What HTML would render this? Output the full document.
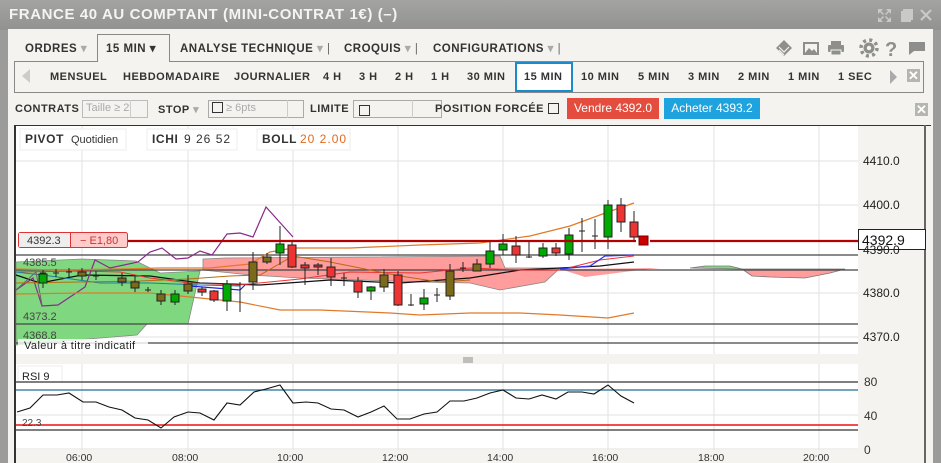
<!DOCTYPE html>
<html><head><meta charset="utf-8"><style>
*{margin:0;padding:0;box-sizing:border-box}
body{width:941px;height:463px;overflow:hidden;background:#9b9c99;font-family:"Liberation Sans",sans-serif;position:relative}
.title{position:absolute;left:0;top:0;width:941px;height:30px;background:linear-gradient(#a3a4a1,#929390);}
.title span{position:absolute;left:9px;top:6px;color:#f4f4f2;font-weight:bold;font-size:15px;letter-spacing:0.6px}
.main{position:absolute;left:8px;top:29px;width:925px;height:434px;background:#f4f3ef}
.t{position:absolute;font-size:11.5px;font-weight:bold;color:#333;letter-spacing:0.5px;white-space:nowrap}
.ab{position:absolute}
</style></head><body>
<div class="title"><span>FRANCE 40 AU COMPTANT (MINI-CONTRAT 1€) (–)</span>
<svg class="ab" style="left:876px;top:7px" width="60" height="17"><g fill="#c9cac7"><path d="M2 2h5l-2 2 3 3-1 1-3-3-2 2z M15 2h-5l2 2-3 3 1 1 3-3 2 2z M2 15h5l-2-2 3-3-1-1-3 3-2-2z M15 15h-5l2-2-3-3 1-1 3 3 2-2z"/><rect x="25" y="4" width="10" height="11"/><rect x="27" y="2" width="10" height="11"/></g><path d="M45 3l10 10M55 3l-10 10" stroke="#c9cac7" stroke-width="2.2"/></svg>
</div>
<div class="main"></div>
<!-- menu row -->
<div class="ab" style="left:97px;top:34px;width:73px;height:28px;border:1px solid #888;border-bottom:none;background:#f4f3ef"></div>
<div class="t" style="left:25px;top:41px">ORDRES <span style="color:#aaa">▾</span></div>
<div class="t" style="left:106px;top:41px">15 MIN ▾</div>
<div class="t" style="left:180px;top:41px">ANALYSE TECHNIQUE <span style="color:#aaa">▾</span> <span style="font-weight:normal;color:#666">|</span></div>
<div class="t" style="left:344px;top:41px">CROQUIS <span style="color:#aaa">▾</span> <span style="font-weight:normal;color:#666">|</span></div>
<div class="t" style="left:433px;top:41px">CONFIGURATIONS <span style="color:#aaa">▾</span> <span style="font-weight:normal;color:#666">|</span></div>
<svg class="ab" style="left:772px;top:38px" width="160" height="20" fill="#8e8f8c">
<path d="M4 10l8-8 8 8-8 8z" /><path d="M7 9l5 5 5-5M7 12l5 5" stroke="#f4f3ef" stroke-width="1.2" fill="none"/>
<rect x="31" y="4" width="16" height="13" fill="#8e8f8c"/><rect x="33" y="6" width="12" height="9" fill="#f4f3ef"/><path d="M33 15l4-5 3 3 2-2 3 4z"/>
<rect x="59" y="3" width="10" height="4"/><rect x="56" y="7" width="16" height="7" rx="1"/><rect x="59" y="12" width="10" height="5" fill="#8e8f8c" stroke="#f4f3ef"/>
<circle cx="97" cy="10" r="8" fill="none" stroke="#8e8f8c" stroke-width="3.5" stroke-dasharray="3 3.28"/><circle cx="97" cy="10" r="5.5"/><circle cx="97" cy="10" r="2.2" fill="#f4f3ef"/>
<text x="113" y="18" font-size="20" font-weight="bold" font-family="Liberation Sans">?</text>
<path d="M137 4h16v9h-11l-5 4z"/>
</svg>
<!-- timeframe row -->
<div class="ab" style="left:14px;top:61px;width:910px;height:32px;border:1px solid #888;border-top:1px solid #888"></div>
<div class="ab" style="left:98px;top:61px;width:71px;height:2px;background:#f4f3ef"></div>
<div class="ab" style="left:22px;top:69px;width:0;height:0;border-top:7px solid transparent;border-bottom:7px solid transparent;border-right:8px solid #ccc"></div>
<div class="ab" style="left:515px;top:62px;width:58px;height:30px;border:2px solid #1b8ccb;background:#fff"></div>
<div class="t" style="left:50px;top:71px;font-size:11px">MENSUEL</div>
<div class="t" style="left:123px;top:71px;font-size:11px">HEBDOMADAIRE</div>
<div class="t" style="left:234px;top:71px;font-size:11px">JOURNALIER</div>
<div class="t" style="left:323px;top:71px;font-size:11px">4 H</div>
<div class="t" style="left:359px;top:71px;font-size:11px">3 H</div>
<div class="t" style="left:395px;top:71px;font-size:11px">2 H</div>
<div class="t" style="left:431px;top:71px;font-size:11px">1 H</div>
<div class="t" style="left:467px;top:71px;font-size:11px">30 MIN</div>
<div class="t" style="left:524px;top:71px;font-size:11px">15 MIN</div>
<div class="t" style="left:581px;top:71px;font-size:11px">10 MIN</div>
<div class="t" style="left:638px;top:71px;font-size:11px">5 MIN</div>
<div class="t" style="left:688px;top:71px;font-size:11px">3 MIN</div>
<div class="t" style="left:738px;top:71px;font-size:11px">2 MIN</div>
<div class="t" style="left:788px;top:71px;font-size:11px">1 MIN</div>
<div class="t" style="left:838px;top:71px;font-size:11px">1 SEC</div>
<div class="ab" style="left:890px;top:70px;width:0;height:0;border-top:7px solid transparent;border-bottom:7px solid transparent;border-left:7px solid #aaa"></div>
<div class="ab" style="left:907px;top:69px;width:13px;height:13px;background:#b5b5b2;color:#fff;font-size:13px;font-weight:bold;line-height:13px;text-align:center">✕</div>
<!-- order row -->
<div class="t" style="left:15px;top:103px;font-size:11px">CONTRATS</div>
<div class="ab" style="left:82px;top:100px;width:66px;height:18px;border:1px solid #bbb;background:#f4f3ef;font-size:11px;color:#aaa;padding:1px 3px">Taille ≥ 2</div>
<div class="ab" style="left:130px;top:100px;width:1px;height:18px;background:#ccc"></div>
<div class="t" style="left:158px;top:103px;font-size:11px">STOP <span style="color:#aaa">▾</span></div>
<div class="ab" style="left:208px;top:100px;width:96px;height:18px;border:1px solid #aaa;font-size:11px;color:#aaa;padding:1px 3px"><span style="display:inline-block;width:11px;height:11px;border:1px solid #333;vertical-align:-2px"></span> ≥ 6pts</div>
<div class="ab" style="left:287px;top:100px;width:1px;height:18px;background:#ccc"></div>
<div class="t" style="left:310px;top:103px;font-size:11px">LIMITE</div>
<div class="ab" style="left:353px;top:100px;width:89px;height:18px;border:1px solid #aaa;padding:2px 5px"><span style="display:inline-block;width:11px;height:11px;border:1px solid #333"></span></div>
<div class="ab" style="left:412px;top:100px;width:1px;height:18px;background:#ccc"></div>
<div class="t" style="left:435px;top:103px;font-size:11px">POSITION FORCÉE <span style="display:inline-block;width:11px;height:11px;border:1px solid #333;vertical-align:-2px"></span></div>
<div class="ab" style="left:567px;top:98px;width:92px;height:21px;background:#e44d3d;color:#fff;font-size:12px;text-align:center;line-height:21px">Vendre 4392.0</div>
<div class="ab" style="left:664px;top:98px;width:96px;height:21px;background:#1ea3de;color:#fff;font-size:12px;text-align:center;line-height:21px">Acheter 4393.2</div>
<div class="ab" style="left:915px;top:103px;width:13px;height:13px;background:#b5b5b2;color:#fff;font-size:13px;font-weight:bold;line-height:13px;text-align:center">✕</div>
<!-- chart frame -->
<div class="ab" style="left:14px;top:125px;width:917px;height:338px;border-left:2px solid #333;border-top:1px solid #333;background:#f4f3ef"></div>
<div class="ab" style="left:924px;top:125px;width:2px;height:338px;background:#666"></div>
<svg class="ab" style="left:0;top:0" width="941" height="463" font-family="Liberation Sans">
<rect x="16" y="126" width="842" height="228" fill="#fff"/>
<rect x="16" y="364" width="842" height="86" fill="#fff"/>
<g stroke="#e2e2e2" stroke-width="1">
<path d="M82 126V354M188 126V354M293 126V354M398 126V354M503 126V354M608 126V354M714 126V354M819 126V354"/>
<path d="M16 161H858M16 205H858M16 293H858M16 337H858"/>
<path d="M82 364V450M188 364V450M293 364V450M398 364V450M503 364V450M608 364V450M714 364V450M819 364V450"/>
<path d="M16 415H858M16 449H858"/>
</g>
<!-- legend boxes -->
<g fill="#fff" stroke="#eee"><rect x="20" y="129" width="106" height="21"/><rect x="147" y="129" width="90" height="21"/><rect x="257" y="129" width="93" height="21"/></g>
<text x="25" y="143" font-size="12" font-weight="bold" fill="#333" letter-spacing="0.6">PIVOT</text>
<text x="71" y="143" font-size="11" fill="#333">Quotidien</text>
<text x="152" y="143" font-size="12" font-weight="bold" fill="#333" letter-spacing="0.6">ICHI</text>
<text x="184" y="143" font-size="12" fill="#333" letter-spacing="1">9 26 52</text>
<text x="262" y="143" font-size="12" font-weight="bold" fill="#333" letter-spacing="0.6">BOLL</text>
<text x="300" y="143" font-size="12" fill="#e06a1f" letter-spacing="1">20 2.00</text>
<!-- clouds -->
<path d="M16 262L82 259L136 261L160 273L200 271L188 324L147 324L137 335L16 345Z" fill="#7fd87f" stroke="#888" stroke-width="0.8"/>
<path d="M203 259L225 258L500 256L505 268L560 268L545 282L500 290L470 283L420 282L360 280L300 278L250 275L203 270Z" fill="#ff9d9d" stroke="#888" stroke-width="0.8"/>
<path d="M560 269L585 277L640 270L650 269L660 268Z" fill="#ff9d9d"/>
<path d="M690 268L705 266L730 266L742 269Z" fill="#7fd87f" stroke="#777" stroke-width="0.8"/>
<path d="M742 269L752 276L770 277L805 278L830 273L845 269Z" fill="#ff9d9d" stroke="#777" stroke-width="0.8"/>
<!-- horizontal pivots -->
<g stroke="#444" stroke-width="1.2"><path d="M16 255H858M16 270H858M16 324H858M16 343H858"/></g>
<!-- ichimoku lines -->
<path d="M16 275L40 283L82 275L150 276L200 283L260 285L330 280L400 283L470 278L520 270L560 268L600 266L634 262" stroke="#111" stroke-width="1.3" fill="none"/>
<path d="M16 272L82 271L120 272L150 278L190 283L238 285L300 279L350 272L420 273L470 268L520 270L560 270L600 260L634 256" stroke="#e33" stroke-width="1" fill="none"/>
<path d="M16 272L50 276L100 283L150 283L200 285L240 286" stroke="#1f7e9f" stroke-width="1" fill="none"/>
<path d="M190 286L240 290L245 285" stroke="#22d" stroke-width="1.2" fill="none"/>
<path d="M560 269L590 266L605 256L634 255" stroke="#33e" stroke-width="1.2" fill="none"/>
<path d="M16 290L33 278L42 306L58 305L85 287L95 260L110 268L138 262L150 252L162 248L176 259L188 258L200 251L212 255L227 234L240 233L253 237L266 207L293 237" stroke="#8b2a8b" stroke-width="1.2" fill="none"/>
<path d="M16 290L36 272L42 305" stroke="#666" stroke-width="1" fill="none"/>
<!-- bollinger -->
<path d="M16 269L60 270L120 269L160 268L210 268L250 264L270 252L293 248L350 248L420 245L480 243L530 236L570 226L608 212L634 203" stroke="#e07a2a" stroke-width="1.2" fill="none"/>
<path d="M16 294L80 293L150 293L200 298L240 302L280 310L320 310L390 313L420 315L470 313L520 313L560 315L608 318L634 313" stroke="#e07a2a" stroke-width="1.2" fill="none"/>
<path d="M16 283L80 282L140 281L188 279L230 276L260 275L293 256L330 262L360 268L400 276L440 282L470 280" stroke="#b86c10" stroke-width="1" fill="none"/>
<!-- candles -->
<g stroke="#222" stroke-width="1">
<path d="M43 270V288M56 269V277M69 268V277M82 268V280M96 271V280M122 273V286M135 276V292M148 287V292M161 290V305M175 290V305M188 275V294M202 287V296M214 290V302M227 280V311M240 282V312M253 252V290M267 253V264M280 226V265M292 240V268M305 262V285M318 263V275M331 258V286M344 273V286M358 277V298M371 286V300M384 269V292M398 271V306M411 294V306M424 289V310M437 288V302M450 264V300M463 262V272M477 259V271M490 240V268M503 234V255M516 236V263M529 242V258M543 243V258M556 243V256M569 228V260M582 218V252M595 219V249M608 200V249M621 198V232M634 211V240"/>
<path d="M40 273H46M53 273H59M66 272H72M93 276H99M145 290H151M341 278H347M408 305H414M434 295H440M460 268H466M526 257H532M579 231H585M592 236H598"/>
</g>
<g stroke="#222" stroke-width="1">
<rect x="39" y="274" width="8" height="9" fill="#0a0"/>
<rect x="78" y="272" width="8" height="4" fill="#7a6a1a"/>
<rect x="118" y="278" width="8" height="4" fill="#7a6a1a"/>
<rect x="131" y="282" width="8" height="6" fill="#7a6a1a"/>
<rect x="157" y="294" width="8" height="7" fill="#7a6a1a"/>
<rect x="171" y="294" width="8" height="8" fill="#0a0"/>
<rect x="184" y="284" width="8" height="7" fill="#7a6a1a"/>
<rect x="198" y="289" width="8" height="3" fill="#e33"/>
<rect x="210" y="291" width="8" height="9" fill="#e33"/>
<rect x="223" y="284" width="8" height="17" fill="#0a0"/>
<rect x="249" y="262" width="8" height="20" fill="#7a6a1a"/>
<rect x="263" y="257" width="8" height="5" fill="#7a6a1a"/>
<rect x="276" y="244" width="8" height="9" fill="#0a0"/>
<rect x="288" y="245" width="8" height="22" fill="#e33"/>
<rect x="301" y="265" width="8" height="3" fill="#e33"/>
<rect x="314" y="265" width="8" height="2" fill="#e33"/>
<rect x="327" y="267" width="8" height="10" fill="#e33"/>
<rect x="354" y="281" width="8" height="11" fill="#e33"/>
<rect x="367" y="287" width="8" height="4" fill="#0a0"/>
<rect x="380" y="275" width="8" height="12" fill="#7a6a1a"/>
<rect x="394" y="275" width="8" height="30" fill="#e33"/>
<rect x="420" y="298" width="8" height="6" fill="#0a0"/>
<rect x="446" y="271" width="8" height="25" fill="#7a6a1a"/>
<rect x="473" y="264" width="8" height="7" fill="#7a6a1a"/>
<rect x="486" y="251" width="8" height="13" fill="#0a0"/>
<rect x="499" y="244" width="8" height="6" fill="#0a0"/>
<rect x="512" y="246" width="8" height="9" fill="#e33"/>
<rect x="539" y="248" width="8" height="8" fill="#0a0"/>
<rect x="552" y="248" width="8" height="5" fill="#e33"/>
<rect x="565" y="235" width="8" height="19" fill="#0a0"/>
<rect x="604" y="205" width="8" height="32" fill="#0a0"/>
<rect x="617" y="205" width="8" height="17" fill="#e33"/>
<rect x="630" y="222" width="8" height="15" fill="#e33"/>
</g>
<!-- price line -->
<path d="M128 241H636M650 241H858" stroke="#b30000" stroke-width="2.2"/>
<rect x="639" y="236" width="9" height="9" fill="#c00" stroke="#700"/>
<rect x="18.5" y="232.5" width="109" height="15" rx="2" fill="#fcc" stroke="#d33"/>
<rect x="19" y="233" width="51" height="14" fill="#eee"/>
<line x1="70.5" y1="233" x2="70.5" y2="247" stroke="#d33"/>
<text x="27" y="244" font-size="11" fill="#333">4392.3</text>
<text x="80" y="244" font-size="11" fill="#c33">− E1,80</text>
<rect x="858.5" y="229.5" width="67" height="20" fill="#fff" stroke="#222"/>
<text x="862" y="245" font-size="14" fill="#111">4392.9</text>
<!-- labels -->
<g font-size="11" fill="#444"><text x="23" y="266">4385.5</text><text x="23" y="320">4373.2</text><text x="23" y="339">4368.8</text></g>
<rect x="18" y="339" width="130" height="12" fill="#fff" opacity="0.8"/>
<text x="24" y="349" font-size="11" fill="#222" letter-spacing="0.4">Valeur à titre indicatif</text>
<g font-size="12" fill="#222"><text x="863" y="165">4410.0</text><text x="863" y="209">4400.0</text><text x="863" y="254">4390.0</text><text x="863" y="297">4380.0</text><text x="863" y="341">4370.0</text></g>
<path d="M463 358h10M463 360h10M463 362h10" stroke="#888"/>
<!-- RSI -->
<rect x="18" y="366" width="44" height="16" fill="#fff" stroke="#eee"/>
<text x="22" y="380" font-size="11" fill="#222">RSI  9</text>
<path d="M16 382H858" stroke="#333" stroke-width="1.2"/>
<path d="M16 390H858" stroke="#1d6f8f" stroke-width="1.2"/>
<path d="M16 425H858" stroke="#e11" stroke-width="1.5"/>
<path d="M16 430H858" stroke="#333" stroke-width="1.2"/>
<text x="22" y="426" font-size="10" fill="#444">22.3</text>
<polyline fill="none" stroke="#111" stroke-width="1.1" points="17,412 30,408 43,395 57,395 69,393 83,402 96,402 109,407 122,410 135,418 148,420 161,428 174,417 188,412 200,413 214,420 227,403 240,405 254,392 266,389 280,385 293,403 306,402 318,403 331,409 344,410 358,417 371,412 384,406 397,419 410,419 424,414 437,412 450,401 464,401 477,398 490,393 503,390 516,398 529,399 542,395 556,399 568,392 582,392 594,394 608,385 621,396 634,403"/>
<g font-size="12" fill="#333"><text x="864" y="386">80</text><text x="864" y="420">40</text><text x="864" y="454">0</text></g>
<g font-size="10.5" fill="#333"><text x="66" y="461">06:00</text><text x="172" y="461">08:00</text><text x="277" y="461">10:00</text><text x="382" y="461">12:00</text><text x="487" y="461">14:00</text><text x="592" y="461">16:00</text><text x="698" y="461">18:00</text><text x="803" y="461">20:00</text></g>
</svg>
</body></html>
